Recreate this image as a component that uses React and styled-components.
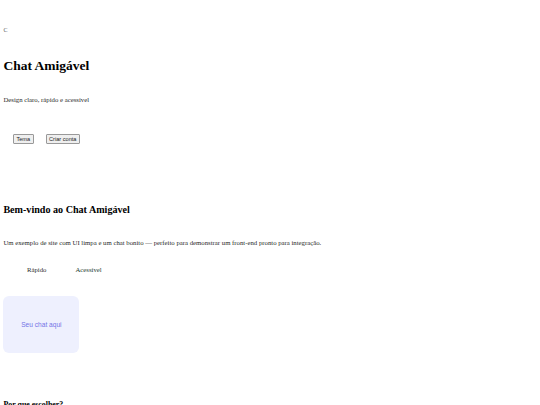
import React from "react";
import styled, { createGlobalStyle } from "styled-components";

const Global = createGlobalStyle`
  html, body { background: #ffffff; }
  body {
    margin: 3.4px;
    font-family: "Liberation Serif", "Times New Roman", serif;
    font-size: 6.75px;
    color: #111;
  }
`;

const Page = styled.div`
  display: flex;
  flex-direction: column;
`;

const Header = styled.header`
  display: flex;
  flex-direction: column;
  padding-top: 23px;
`;

const Logo = styled.div`
  font-size: 6px;
  line-height: 8px;
  color: #555;
`;

const Title = styled.h1`
  margin: 24px 0 0;
  font-size: 13.5px;
  line-height: 16px;
  font-weight: bold;
  color: #000;
`;

const Tagline = styled.p`
  margin: 22px 0 0;
  font-size: 6.75px;
  line-height: 8px;
  color: #2a2a2a;
`;

const Actions = styled.nav`
  display: flex;
  gap: 12px;
  margin-top: 30px;
  padding-left: 9.5px;
`;

const Button = styled.button`
  font-family: "Liberation Sans", Arial, sans-serif;
  font-size: 5.6px;
  line-height: 7px;
  padding: 0.5px 2.5px;
  margin: 0;
  background: #efefef;
  color: #222;
  border: 1px solid #999;
  border-radius: 1px;
`;

const Hero = styled.section`
  display: flex;
  flex-direction: column;
  margin-top: 60px;
`;

const Heading = styled.h2`
  margin: 0;
  font-size: 10.1px;
  line-height: 12px;
  font-weight: bold;
  color: #000;
`;

const Lead = styled.p`
  margin: 23px 0 0;
  font-size: 6.75px;
  line-height: 8px;
  color: #2a2a2a;
`;

const Features = styled.ul`
  display: flex;
  list-style: none;
  margin: 19px 0 0;
  padding: 0 0 0 23.5px;
  gap: 29px;
`;

const Feature = styled.li`
  font-size: 6.75px;
  line-height: 8px;
  color: ${(p) => (p.$accent ? "#1c3b30" : "#2a2a2a")};
`;

const ChatBox = styled.div`
  margin-top: 22px;
  width: 76px;
  height: 57px;
  border-radius: 6px;
  background: #eef0fe;
  display: flex;
  align-items: center;
  justify-content: center;
  font-family: "Liberation Sans", Arial, sans-serif;
  font-size: 6.6px;
  color: #7474e6;
`;

const Section = styled.section`
  margin-top: 47px;
`;

const SubHeading = styled.h3`
  margin: 0;
  font-size: 7.9px;
  line-height: 10px;
  font-weight: bold;
  color: #000;
`;

export default function App() {
  return (
    <Page>
      <Global />
      <Header>
        <Logo>C</Logo>
        <Title>Chat Amigável</Title>
        <Tagline>Design claro, rápido e acessível</Tagline>
        <Actions>
          <Button>Tema</Button>
          <Button>Criar conta</Button>
        </Actions>
      </Header>
      <Hero>
        <Heading>Bem-vindo ao Chat Amigável</Heading>
        <Lead>
          Um exemplo de site com UI limpa e um chat bonito — perfeito para
          demonstrar um front-end pronto para integração.
        </Lead>
        <Features>
          <Feature>Rápido</Feature>
          <Feature $accent>Acessível</Feature>
        </Features>
        <ChatBox>Seu chat aqui</ChatBox>
      </Hero>
      <Section>
        <SubHeading>Por que escolher?</SubHeading>
      </Section>
    </Page>
  );
}
